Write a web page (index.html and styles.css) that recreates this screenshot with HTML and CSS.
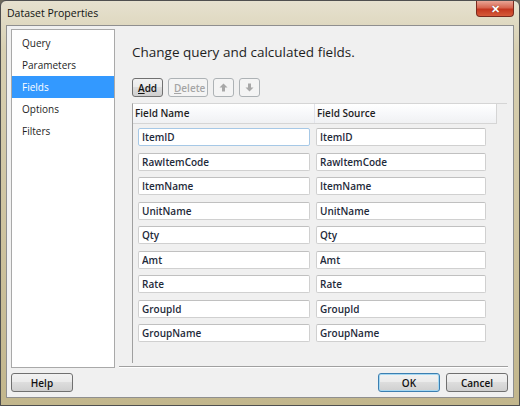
FILE: index.html
```
<html>
    <head>
        <meta charset="utf-8" />
        <title>Dataset Properties</title>
        <link rel="stylesheet" href="styles.css">
    </head>
    <body>
        <div class="window">
            <div class="titlebar">
                <span class="title">Dataset Properties</span>
                <div class="close">&#x2715;</div>
            </div>
            <div class="client">
                <div class="main">
                    <ul class="nav">
                        <li>Query</li>
                        <li>Parameters</li>
                        <li class="selected">Fields</li>
                        <li>Options</li>
                        <li>Filters</li>
                    </ul>
                    <div class="page">
                        <h1>Change query and calculated fields.</h1>
                        <div class="toolbar">
                            <button class="btn add"><u>A</u>dd</button>
                            <button class="btn delete" disabled><u>D</u>elete</button>
                            <button class="btn arrow" disabled>
                                <svg width="9" height="9" viewBox="0 0 9 9"><path d="M4.5 0.5 L8.5 4.5 L6 4.5 L6 8.5 L3 8.5 L3 4.5 L0.5 4.5 Z" fill="#a8a8a8"/></svg>
                            </button>
                            <button class="btn arrow" disabled>
                                <svg width="9" height="9" viewBox="0 0 9 9"><path d="M4.5 8.5 L8.5 4.5 L6 4.5 L6 0.5 L3 0.5 L3 4.5 L0.5 4.5 Z" fill="#a8a8a8"/></svg>
                            </button>
                        </div>
                        <div class="grid">
                            <div class="grid-head">
                                <div class="col">Field Name</div>
                                <div class="col">Field Source</div>
                            </div>
                            <div class="grid-body">
                                <input class="cell focus" value="ItemID"><input class="cell" value="ItemID">
                                <input class="cell" value="RawItemCode"><input class="cell" value="RawItemCode">
                                <input class="cell" value="ItemName"><input class="cell" value="ItemName">
                                <input class="cell" value="UnitName"><input class="cell" value="UnitName">
                                <input class="cell" value="Qty"><input class="cell" value="Qty">
                                <input class="cell" value="Amt"><input class="cell" value="Amt">
                                <input class="cell" value="Rate"><input class="cell" value="Rate">
                                <input class="cell" value="GroupId"><input class="cell" value="GroupId">
                                <input class="cell" value="GroupName"><input class="cell" value="GroupName">
                            </div>
                        </div>
                    </div>
                </div>
                <div class="footer">
                    <button class="btn wide">Help</button>
                    <span class="spacer"></span>
                    <button class="btn wide default">OK</button>
                    <button class="btn wide">Cancel</button>
                </div>
            </div>
        </div>
    </body>
</html>
```
FILE: styles.css
```
html, body {
    margin: 0;
    padding: 0;
    font-family: "Open Sans", "Liberation Sans", sans-serif;
    font-size: 10px;
    color: #1e1e1e;
    background: #6e6a5c;
}

.window {
    box-sizing: border-box;
    width: 520px;
    height: 406px;
    border: 1px solid #4f4f4f;
    border-radius: 6px 6px 0 0;
    background: linear-gradient(#e6e1cf, #d8d0b2 12%, #cdc29d 60%, #c2b68c);
    display: flex;
    flex-direction: column;
    overflow: hidden;
}

.titlebar {
    height: 24px;
    display: flex;
    align-items: flex-start;
    padding-left: 6px;
}

.title {
    margin-top: 5px;
    font-size: 10.5px;
    color: #111;
}

.close {
    margin-left: auto;
    margin-right: 5px;
    width: 38px;
    height: 16px;
    box-sizing: border-box;
    border: 1px solid #7a2a1e;
    border-top: none;
    border-radius: 0 0 4px 4px;
    background: linear-gradient(#e9a595, #d6654f 45%, #c3361f 55%, #d65a3a);
    color: #fff;
    font-size: 11px;
    font-weight: bold;
    text-align: center;
    line-height: 15px;
    text-shadow: 0 0 1px #6b1a0c;
}

.client {
    flex: 1;
    margin: 0 5px 7px 5px;
    border: 1px solid #8f8f8f;
    background: #f0f0f0;
    display: flex;
    flex-direction: column;
}

.main {
    flex: 1;
    display: flex;
    padding: 3px 0 0 4px;
}

.nav {
    list-style: none;
    margin: 0;
    padding: 2px 0 0 0;
    width: 104px;
    height: 339px;
    box-sizing: border-box;
    border: 1px solid #a9a9a9;
    background: #fff;
}

.nav li {
    height: 22px;
    line-height: 22px;
    padding-left: 10px;
    color: #1e1e1e;
}

.nav li.selected {
    background: #3399ff;
    color: #fff;
}

.page {
    flex: 1;
    margin-left: 4px;
    padding: 0 0 0 13px;
    border-bottom: 1px solid #a0a0a0;
    box-shadow: 0 1px 0 #fff;
    height: 337px;
    margin-right: 5px;
    display: flex;
    flex-direction: column;
}

h1 {
    font-weight: normal;
    font-size: 13.5px;
    margin: 14px 0 0 0;
    color: #1e1e1e;
}

.toolbar {
    display: flex;
    gap: 5px;
    margin-top: 17px;
}

.btn {
    font-family: inherit;
    font-size: 10px;
    height: 19px;
    padding: 0 5px;
    border: 1px solid #707070;
    border-radius: 3px;
    background: linear-gradient(#f2f2f2, #ebebeb 45%, #dddddd 50%, #cfcfcf);
    color: #111;
    font-weight: 600;
}

.btn:disabled {
    border-color: #adb2b5;
    background: #f4f4f4;
    color: #a5a5a5;
}

.add { width: 31px; }
.delete { width: 40px; }

.arrow {
    width: 21px;
    padding: 0;
    display: flex;
    align-items: center;
    justify-content: center;
}

.grid {
    flex: none;
    margin-top: 6px;
    width: 374px;
    height: 259px;
    border-left: 1px solid #a0a0a0;
    border-top: 1px solid #d5d5d5;
}

.grid-head {
    display: flex;
    width: 363px;
    height: 19px;
    background: linear-gradient(#ffffff, #f7f8fa 50%, #f0f1f3);
    border-bottom: 1px solid #d5d5d5;
    border-right: 1px solid #d5d5d5;
}

.col {
    width: 179px;
    padding-left: 2px;
    line-height: 19px;
    font-weight: 600;
    border-right: 1px solid #e2e3ea;
}

.col + .col {
    border-right: none;
}

.grid-body {
    display: grid;
    grid-template-columns: 172px 170px;
    column-gap: 6px;
    row-gap: 6.5px;
    padding: 4px 0 0 5px;
}

.cell {
    box-sizing: border-box;
    height: 18px;
    border: 1px solid #d0d0d0;
    border-top-color: #c0c0c0;
    border-radius: 2px;
    background: #fff;
    padding: 0 3px;
    font-family: inherit;
    font-size: 10px;
    font-weight: 600;
    color: #1e2a3a;
    outline: none;
}

.cell.focus {
    border-color: #a6c8e6;
}

.footer {
    height: 29px;
    display: flex;
    align-items: center;
    padding: 0 5px 0 4px;
    gap: 6px;
}

.spacer { flex: 1; }

.wide {
    width: 62px;
    height: 19px;
    font-weight: 600;
}

.default {
    border-color: #3c7fb1;
    box-shadow: inset 0 0 0 1px #a6d8f2;
}
```
